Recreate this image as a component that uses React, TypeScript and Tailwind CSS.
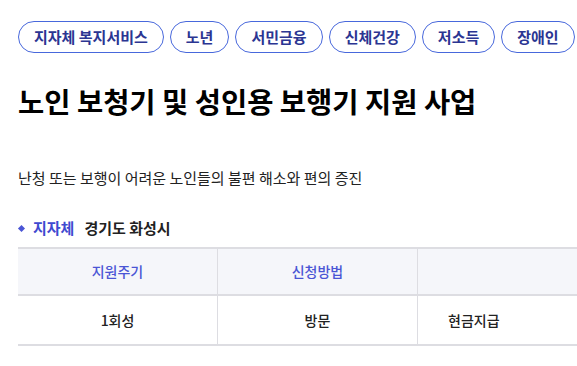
const tags = ["지자체 복지서비스", "노년", "서민금융", "신체건강", "저소득", "장애인"];

export default function App() {
  return (
    <div
      className="w-[577px] h-[366px] overflow-hidden bg-white text-[#111]"
      style={{ fontFamily: '"Noto Sans CJK KR", "Noto Sans", sans-serif' }}
    >
      <div className="pl-[18px] pt-[21px]">
        {/* 태그 */}
        <div className="flex gap-[6px] whitespace-nowrap">
          {tags.map((t) => (
            <span
              key={t}
              className="h-[32px] px-[15px] flex items-center rounded-full border border-[#4868dc] text-[15px] font-bold text-[#2b3592]"
            >
              {t}
            </span>
          ))}
        </div>

        {/* 제목 */}
        <h1 className="mt-[28px] text-[28.5px] leading-[40px] font-bold text-black">
          노인 보청기 및 성인용 보행기 지원 사업
        </h1>

        {/* 설명 */}
        <p className="mt-[46px] text-[15px] leading-[22px] text-[#222]">
          난청 또는 보행이 어려운 노인들의 불편 해소와 편의 증진
        </p>

        {/* 지자체 */}
        <div className="mt-[28px] h-[22px] flex items-center text-[15px] font-bold">
          <span className="w-[5px] h-[5px] rotate-45 bg-[#4a55d5] ml-[1px] mr-[9px]" />
          <span className="text-[#3f4ad0] mr-[10px]">지자체</span>
          <span className="text-[#222]">경기도 화성시</span>
        </div>

        {/* 표 */}
        <div className="mt-[8px] w-[620px] border-t-2 border-[#dddde2]">
          <div className="grid grid-cols-[200px_200px_220px] h-[47px] bg-[#f5f6fa] border-b-2 border-[#dddde2] text-[14px] font-medium text-[#4a55d5]">
            <div className="flex items-center justify-center border-r border-[#dddde2]">지원주기</div>
            <div className="flex items-center justify-center border-r border-[#dddde2]">신청방법</div>
            <div />
          </div>
          <div className="grid grid-cols-[200px_200px_220px] h-[50px] border-b-2 border-[#dddde2] text-[14px] font-medium text-[#222]">
            <div className="flex items-center justify-center border-r border-[#dddde2]">1회성</div>
            <div className="flex items-center justify-center border-r border-[#dddde2]">방문</div>
            <div className="flex items-center pl-[30px]">현금지급</div>
          </div>
        </div>
      </div>
    </div>
  );
}
